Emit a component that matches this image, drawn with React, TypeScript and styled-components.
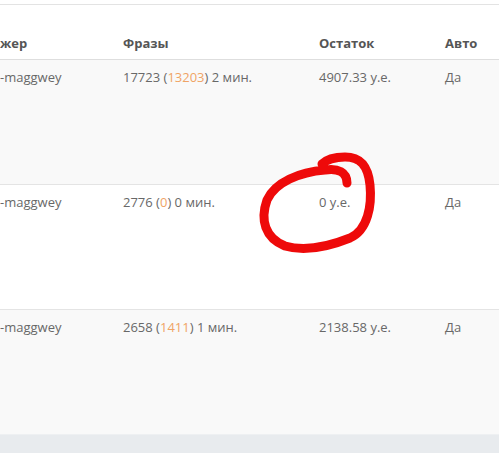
import React from "react";
import styled, { createGlobalStyle } from "styled-components";

const Global = createGlobalStyle`
  html, body { margin: 0; padding: 0; background: #fff; }
  body { font-family: "Open Sans", "Liberation Sans", sans-serif; font-size: 13px; color: #666; }
`;

const Page = styled.div`
  position: relative;
  width: 499px;
  height: 453px;
  overflow: hidden;
  padding-top: 4px;
  box-sizing: border-box;
  display: flex;
  flex-direction: column;
`;

const Table = styled.div`
  border-top: 1px solid #e3e3e3;
  display: flex;
  flex-direction: column;
`;

const cols = "123px 196px 126px 1fr";

const HeadRow = styled.div`
  display: grid;
  grid-template-columns: ${cols};
  height: 54px;
  align-items: end;
  border-bottom: 1px solid #dedede;
  box-sizing: content-box;
`;

const HeadCell = styled.div`
  font-weight: 700;
  color: #555;
  line-height: 18px;
  padding-bottom: 7px;
`;

const Row = styled.div<{ $striped?: boolean }>`
  display: grid;
  grid-template-columns: ${cols};
  height: 124px;
  align-items: start;
  background: ${(p) => (p.$striped ? "#f9f9f9" : "#fff")};
  border-bottom: 1px solid #e4e4e4;
  box-sizing: content-box;
  &:last-child { border-bottom: none; }
`;

const Cell = styled.div`
  line-height: 18px;
  padding-top: 8px;
  color: #686868;
  white-space: nowrap;
`;

const Hl = styled.span`
  color: #f0a465;
`;

const Footer = styled.div`
  flex: 1;
  background: #e8ebee;
  border-top: 1px solid #eef0f2;
`;

const Marker = styled.svg`
  position: absolute;
  left: 0;
  top: 0;
  pointer-events: none;
`;

const rows = [
  { user: "-maggwey", total: "17723", hl: "13203", min: "2", rest: "4907.33 у.е.", auto: "Да" },
  { user: "-maggwey", total: "2776", hl: "0", min: "0", rest: "0 у.е.", auto: "Да" },
  { user: "-maggwey", total: "2658", hl: "1411", min: "1", rest: "2138.58 у.е.", auto: "Да" },
];

export default function App() {
  return (
    <Page>
      <Global />
      <Table>
        <HeadRow>
          <HeadCell>жер</HeadCell>
          <HeadCell>Фразы</HeadCell>
          <HeadCell>Остаток</HeadCell>
          <HeadCell>Авто</HeadCell>
        </HeadRow>
        {rows.map((r, i) => (
          <Row key={i} $striped={i % 2 === 0}>
            <Cell>{r.user}</Cell>
            <Cell>
              {r.total} (<Hl>{r.hl}</Hl>) {r.min} мин.
            </Cell>
            <Cell>{r.rest}</Cell>
            <Cell>{r.auto}</Cell>
          </Row>
        ))}
      </Table>
      <Footer />
      <Marker width="499" height="453" viewBox="0 0 499 453">
        <path
          d="M 347 183 C 347 172 338 168 325 170 C 300 172 275 182 267 200 C 260 220 265 238 285 246 C 305 252 330 246 350 238 C 368 230 372 205 370 185 C 368 165 360 157 345 157 C 335 157 326 160 322 164"
          fill="none"
          stroke="#ee0a0a"
          strokeWidth="9"
          strokeLinecap="round"
          strokeLinejoin="round"
        />
      </Marker>
    </Page>
  );
}
